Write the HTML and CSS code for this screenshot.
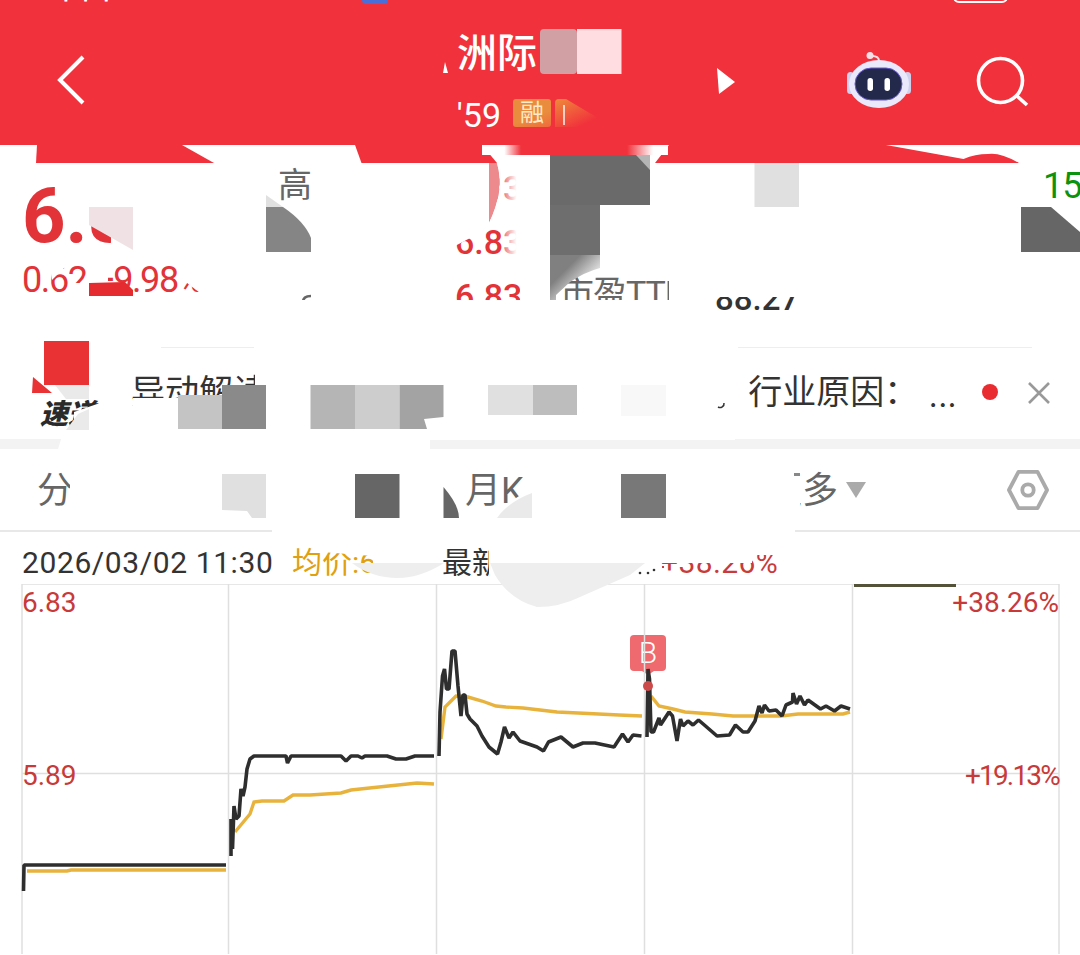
FILE: index.html
```html
<!DOCTYPE html>
<html lang="zh">
<head>
<meta charset="utf-8">
<title>行情</title>
<link rel="stylesheet" href="styles.css">
</head>
<body>
<div class="screen">
  <header class="head">
    <div class="status"><span class="status-l">中国 17:27 15 HKD 5</span><i class="status-app"></i><span class="status-r">46 46 WiFi</span><i class="status-bat"></i></div>
    <div class="nav">
      <svg class="back" viewBox="0 0 30 50" width="30" height="50"><path d="M27 2 4 25l23 23" fill="none" stroke="#fff" stroke-width="4"/></svg>
      <div class="name">
        <div class="title">亚洲际</div>
        <div class="sub"><span class="code">'59</span><span class="badge">融</span></div>
      </div>
      <svg class="play" viewBox="0 0 18 26" width="18" height="26"><path d="M0 0 18 14 2 26Z" fill="#fff"/></svg>
      <svg class="robot" viewBox="0 0 64 56" width="64" height="56">
        <circle cx="23" cy="3.500" r="3.500" fill="#f3dfe6"/><path d="M25 4c4 0 7 1 7 5" fill="none" stroke="#f3dfe6" stroke-width="2"/>
        <rect x="0" y="20" width="7" height="22" rx="3.500" fill="#cfd0ee"/><rect x="57" y="20" width="7" height="22" rx="3.500" fill="#cfd0ee"/>
        <ellipse cx="32" cy="32" rx="30" ry="24" fill="#e9e9fb"/>
        <rect x="8" y="16" width="47" height="32" rx="16" fill="#22294a" stroke="#6a5acd" stroke-width="1"/>
        <rect x="20.500" y="26" width="5.500" height="13" rx="2.700" fill="#fff"/><rect x="37.500" y="26" width="5.500" height="13" rx="2.700" fill="#fff"/>
      </svg>
      <svg class="search" viewBox="0 0 54 54" width="54" height="54"><circle cx="24.500" cy="25.500" r="22" fill="none" stroke="#fff" stroke-width="3.600"/><path d="M41 41l10 9" stroke="#fff" stroke-width="3.600"/></svg>
    </div>
  </header>

  <section class="quote">
    <div class="price">
      <div class="big">6.83</div>
      <div class="change">0.62 +9.98%</div>
    </div>
    <div class="stats">
      <span class="lab">高</span><span class="val">6.83</span><span class="lab">换手</span><span class="dark">&nbsp;</span>
      <span class="lab">开</span><span class="val">6.83</span><span class="lab">量比</span><span class="dark">&nbsp;</span>
      <span class="lab">低</span><span class="val">6.83</span><span class="lab lab-pe">市盈TTM</span><span class="dark dark-pe">88.27</span>
    </div>
    <span class="green">15</span>
  </section>

  <section class="tip">
    <div class="logo"><span class="logo-sq"></span><span class="logo-tx">速递</span></div>
    <div class="tip-text"><span>异动解读</span><span class="tip-r">行业原因：<span class="ell">…</span></span></div>
    <span class="dot"></span>
    <svg class="close" viewBox="0 0 24 24" width="24" height="24"><path d="M2 2l20 20M22 2 2 22" stroke="#999" stroke-width="2.600"/></svg>
  </section>

  <div class="gap"></div>

  <nav class="tabs">
    <span class="tab">分时</span><span class="tab">五日</span><span class="tab">日K</span><span class="tab">周K</span><span class="tab">月K</span><span class="tab">季K</span><span class="tab tab-s">年K</span><span class="tab tab-more">更多<i class="caret"></i></span>
    <svg class="gear" viewBox="0 0 44 42" width="42" height="40"><path d="M12 2h20l10 19-10 19H12L2 21Z" fill="none" stroke="#aaa" stroke-width="4" stroke-linejoin="round"/><circle cx="22" cy="21" r="6" fill="none" stroke="#aaa" stroke-width="4"/></svg>
  </nav>

  <div class="info">
    <span class="date">2026/03/02 11:30</span><span class="avg">均价:6.58</span><span class="last">最新:6.83</span><span class="pct">+38.26%</span>
  </div>

  <section class="chart">
    <span class="flag">B</span>
    <svg class="plot" viewBox="0 0 1080 370" width="1080" height="370">
      <g transform="translate(0 -585)">
        <path class="grid" d="M22 585H1059M22 774.500H1059M22 585V955M228.500 585V955M436.500 585V955M644.500 585V955M852.500 585V955M1059 585V955"/>
        <path class="flat" d="M854 586H956"/>
        <path class="gold" d="M27 872H67L71 871H226"/>
        <path class="gold" d="M235 833 250 815 254 803 262 802H284L293 796H310L341 794 351 791 379 788 417 784 434 785"/>
        <path class="gold" d="M441 740 445 708 456 697 468 698 482 702 496 707 506 708 523 709 540 711 557 713 578 714 619 716 642 717"/>
        <path class="gold" d="M651 697 659 707 673 710 685 713 712 715 733 717H781L798 715H843L850 713"/>
        <path class="line" d="M23.500 892 24 866H226"/>
        <path class="line" d="M231 857V820L232.500 850 234 807 236 820 239 817 241 790 243 797 245 788 247 770 250 760 254 757H286L287.500 764 291 757H341L346 762 351 757H358L362 759 365 757H387L396 760H406L415 757H434"/>
        <path class="line" d="M439 757 440 713 442.500 677 444.500 670 446.500 690H449L452 652H455L458 687 461 717 463 696H465L467 715 470 720 477 727 482 737 489 748 497.500 755 501 743 504.500 728 509 739 513 733 520 742 537 748 543.500 752 548.500 743 561 738 573 748 583 744H595L614 748 622.500 735 628 743 633 736 641.500 737"/>
        <path class="line" d="M647 738 648 670 649.500 680 651 733H653.500L659 719 660.500 726 669 713 672.500 717 677 742 680.500 720 683 727 688 722 693 726 698.500 721 705.500 727 717 737 729.500 736 735.500 726 743 733H748L755 722 759 707 762 714 764.500 706 769 712 776 711 782 717 786 706 792.500 703 793 694 796.500 705 800 697 804.500 706 808 701 820.500 710 826 707 834.500 712 841 707 850 710"/>
        <circle cx="648" cy="687" r="5" fill="#cc4a4a"/>
      </g>
    </svg>
    <span class="tick tick-tl">6.83</span>
    <span class="tick tick-tr">+38.26%</span>
    <span class="tick tick-ml">5.89</span>
    <span class="tick tick-mr">+19.13%</span>
    <span class="tick tick-bl">4.95</span>
    <span class="tick tick-br">0.00%</span>
  </section>

  <svg class="mask" viewBox="0 0 1080 955" width="1080" height="955">
    <defs>
      <linearGradient id="band" x1="0" x2="1" y1="0" y2="0"><stop offset=".12" stop-color="#fff"/><stop offset=".21" stop-color="#f1323c"/><stop offset=".78" stop-color="#f1323c"/><stop offset=".92" stop-color="#fff"/></linearGradient>
      <linearGradient id="fadeGrey" x1="0" x2="1" y1="0" y2="1"><stop offset=".3" stop-color="#808080"/><stop offset=".75" stop-color="#fff"/></linearGradient>
      <linearGradient id="fadeBadge" x1="0" x2="1" y1="0" y2="1"><stop offset="0" stop-color="#ee8a3a"/><stop offset=".7" stop-color="#f1323c"/></linearGradient>
      <linearGradient id="fadeWhite" x1="0" x2="1" y1="0" y2="0"><stop offset="0" stop-color="#fff" stop-opacity=".35"/><stop offset=".7" stop-color="#fff"/></linearGradient>
    </defs>
    <!-- red torn edge under the header -->
    <path fill="#f1323c" d="M37 145 36 163H214L182 145Z"/>
    <path fill="#f1323c" d="M355 145 361.500 163H497L482 145Z"/>
    <path fill="#f1323c" d="M669 145 655 163H1019Q1000 152 988 154 975 154 963.500 159 925 152 886 145Z"/>
    <rect x="482" y="145" width="186" height="10" fill="url(#band)"/>
    <path fill="#ec8a8e" d="M489 163H497Q505 190 489 223Z"/>
    <!-- title pixel blocks -->
    <rect x="540" y="29" width="37" height="45" rx="4" fill="#d0a0a5"/>
    <rect x="577" y="29" width="44.500" height="45" fill="#ffdde1"/>
    <path d="M410 25h47v55h-47z" fill="#f1323c"/>
    <path fill="#fff" d="M445 62 448 73H443Z"/>
    <path fill="url(#fadeBadge)" d="M555 103Q555 99 559 99H566L613 127H555Z"/>
    <path fill="#fff" opacity=".7" d="M563 105h2v20h-2z"/>
    <!-- quote blocks -->
    <path fill="#fff" d="M76 180H250V262H111V215H76Z"/>
    <path fill="#f0e2e4" d="M89 207H133V250L89 225Z"/>
    <path fill="#fff" d="M50 262H70L52 280Z"/>
    <path fill="#fff" d="M68 283H89V298H68Z"/>
    <rect x="88" y="262" width="20" height="21" fill="#fff"/>
    <path fill="#fff" d="M178 262H220V296H204L178 276Z"/>
    <path fill="#e52b2f" d="M89 283 125 282 133 290V296H89Z"/>
    <rect x="266" y="204" width="154" height="96" fill="#fff"/>
    <path fill="#e0e0e0" d="M266 195 283 207H266Z"/>
    <path fill="#858585" d="M266 207H283Q305 222 311 238V252H266Z"/>
    <path fill="none" stroke="#666" stroke-width="2.500" d="M311 296q-8 0-8 6v8"/>
    <rect x="425" y="163" width="64" height="60" fill="#fff"/>
    <path fill="#fff" d="M497 163H504V223H489Q505 190 497 163Z"/>
    <rect x="504" y="170" width="18" height="30" fill="url(#fadeWhite)"/>
    <rect x="504" y="228" width="18" height="30" fill="url(#fadeWhite)"/>
    <path fill="#fff" d="M450 226H474V236L455 246Z"/>
    <path fill="#fff" d="M520 170H550V300H520Z"/>
    <rect x="600" y="205" width="110" height="72" fill="#fff"/>
    <rect x="650" y="163" width="100" height="42" fill="#fff"/>
    <rect x="550" y="155" width="100" height="50" fill="#6a6a6a"/>
    <path fill="#fff" opacity=".5" d="M636 155H650V170Z"/>
    <rect x="550" y="205" width="50" height="50" fill="#6e6e6e"/>
    <path fill="url(#fadeGrey)" d="M550 255H600V268Q585 272 570 282L556 295V305H550Z"/>
    <rect x="754.500" y="163" width="44.500" height="44" fill="#e0e0e0"/>
    <path fill="#666" d="M1021 207H1051L1080 232V252H1021Z"/>
    <!-- white smear over the lower rows -->
    <rect x="0" y="300" width="700" height="40" fill="#fff"/>
    <rect x="669" y="275" width="40" height="30" fill="#fff"/>
    <rect x="700" y="275" width="110" height="22" fill="#fff"/>
    <!-- tip row -->
    <rect x="255" y="340" width="480" height="100" fill="#fff"/>
    <rect x="133" y="398" width="125" height="40" fill="#fff"/>
    <rect x="161" y="347" width="93" height="1" fill="#eee"/>
    <rect x="738" y="347" width="294" height="1" fill="#eee"/>
    <path fill="#eaeaea" d="M55 385H89V399H66Z"/>
    <path fill="#fff" d="M74 412 100 403V430H74Z"/>
    <path fill="#eaeaea" d="M66 430 78 414 89 409V430Z"/>
    <path fill="#e93234" d="M33 377 52 393H32Z"/>
    <rect x="178" y="395" width="44" height="34" fill="#c4c4c4"/>
    <rect x="222" y="385" width="44" height="44" fill="#8a8a8a"/>
    <rect x="310.500" y="385" width="44.500" height="44" fill="#b5b5b5"/>
    <rect x="355" y="385" width="44.500" height="44" fill="#cdcdcd"/>
    <path fill="#a3a3a3" d="M399.500 385H443.500V417L424 419 427 429H399.500Z"/>
    <rect x="488" y="385" width="45" height="30" fill="#e0e0e0"/>
    <rect x="533" y="385" width="44" height="30" fill="#bdbdbd"/>
    <rect x="621" y="385" width="45" height="31" fill="#f8f8f8"/>
    <path fill="none" stroke="#333" stroke-width="1.500" d="M724 403a4 4 0 0 1-6 4"/>
    <!-- divider hole + tabs -->
    <path fill="#fff" d="M64 430H430V449H58Z"/>
    <rect x="70" y="455" width="152" height="70" fill="#fff"/>
    <path fill="#e0e0e0" d="M222 474H266V518H252L247 511 222 510Z"/>
    <rect x="266" y="455" width="190" height="70" fill="#fff"/>
    <rect x="355" y="474" width="44.500" height="44" fill="#666"/>
    <path fill="#666" d="M443.500 487Q459 505 459 518H443.500Z"/>
    <rect x="532" y="455" width="268" height="70" fill="#fff"/>
    <path fill="#fff" d="M497 518 500 508 532 488V518Z"/>
    <path fill="#eaeaea" d="M497 518Q508 502 532 493V518Z"/>
    <rect x="621" y="474" width="45" height="44" fill="#787878"/>
    <path fill="#888" d="M794 473h6v3h-6z"/>
    <rect x="272" y="525" width="523" height="12" fill="#fff"/>
    <!-- info row smear -->
    <path fill="#fff" d="M322 540H373V556L322 552Z"/>
    <path fill="#fff" d="M373 535H442V563H373Z"/>
    <path fill="#eee" d="M352 563H444Q420 578 398 578 372 578 352 563Z"/>
    <path fill="#fff" d="M489 535H778V555H752V563H489Z"/>
    <path fill="#fff" d="M489 563H660V584H489Z"/>
    <path fill="#eee" d="M490 563H645L630 575 580 597Q560 607 537 607 510 600 495 575Z"/>
    <circle cx="640" cy="573" r="1.300" fill="#333"/><circle cx="648" cy="573" r="1.300" fill="#333"/><circle cx="654" cy="570" r="1.300" fill="#333"/>
    <path stroke="#c93a3a" stroke-width="2" d="M662 567h2"/>
  </svg>
</div>
</body>
</html>
```
FILE: styles.css
```css
* { box-sizing: border-box; }
html, body { margin: 0; padding: 0; background: #fff; }
body { font-family: Roboto, "Noto Sans CJK SC", sans-serif; overflow: hidden; }
.screen { position: relative; width: 1080px; height: 955px; overflow: hidden; background: #fff; }

.head { height: 145px; background: #f1323c; color: #fff; overflow: hidden; }
.status { height: 28px; margin-top: -24px; padding: 0 72px 0 52px; display: flex; font-size: 28px; line-height: 28px; font-weight: 500; white-space: nowrap; }
.status-l { width: 298px; letter-spacing: 2px; overflow: hidden; }
.status-app { width: 26px; height: 28px; margin-left: 12px; background: #4a6fd8; border-radius: 4px; }
.status-r { margin-left: auto; letter-spacing: 2px; margin-right: 16px; }
.status-bat { width: 55px; height: 27px; border: 2px solid #fff; border-radius: 6px; }
.nav { display: flex; align-items: flex-start; height: 141px; padding: 0 0 0 56px; }
.back { margin-top: 51px; flex: none; }
.name { flex: none; width: 190px; margin-left: 353px; }
.title { font-size: 40px; line-height: 50px; margin-top: 25px; margin-left: -22px; white-space: nowrap; font-weight: 500; }
.sub { display: flex; align-items: center; margin-top: 20px; height: 28px; }
.code { font-size: 34px; line-height: 28px; width: 62px; text-align: right; padding-top: 3px; }
.badge { width: 38px; height: 28px; margin-left: 12px; background: linear-gradient(160deg, #e98c3e 60%, #ef6a3c); border-radius: 3px; font-size: 24px; line-height: 28px; text-align: center; color: #ffe9c8; }
.play { flex: none; margin: 64px 0 0 88px; }
.robot { flex: none; margin: 48px 0 0 112px; }
.search { flex: none; margin: 51px 0 0 65px; }

.quote { height: 194px; padding: 23px 0 0 22px; display: flex; position: relative; }
.price { width: 256px; flex: none; color: #e23339; }
.big { font-size: 76px; line-height: 70px; font-weight: 700; margin-top: 13px; }
.change { font-size: 36px; line-height: 36px; margin-top: 11px; white-space: nowrap; letter-spacing: -1.4px; }
.stats { display: grid; grid-template-columns: 177px 105px 155px 100px; grid-auto-rows: 54px; font-size: 34px; line-height: 40px; }
.lab { color: #666; margin-top: -3px; }
.val { color: #e23339; font-weight: 500; }
.dark { color: #333; }
.lab-pe { white-space: nowrap; letter-spacing: -1px; }
.dark-pe { font-size: 33px; font-weight: 500; position: relative; top: 3px; }
.green { color: #0a930f; font-size: 36px; line-height: 42px; letter-spacing: -1px; position: absolute; left: 1043px; top: 20px; }

.tip { height: 100px; display: flex; align-items: center; padding: 0 29px 0 32px; }
.logo { width: 99px; flex: none; align-self: stretch; }
.logo-sq { display: block; width: 45px; height: 44px; background: #e93234; margin: 2px 0 0 12px; }
.logo-tx { display: block; font-size: 28px; line-height: 30px; font-weight: 900; font-style: italic; color: #2a2a2a; margin: 12px 0 0 8px; font-family: "Noto Sans CJK SC", sans-serif; white-space: nowrap; }
.tip-text { flex: 1; display: flex; justify-content: space-between; font-size: 34px; line-height: 40px; color: #333; margin-top: 5px; white-space: nowrap; }
.tip-r { margin-right: 24px; }
.ell { font-size: 48px; line-height: 0; font-weight: 300; margin-left: 9px; vertical-align: -3px; }
.dot { width: 16px; height: 16px; border-radius: 50%; background: #e92c2f; flex: none; margin-top: 6px; }
.close { flex: none; margin: 8px 0 0 29px; }

.gap { height: 10px; background: #f3f3f3; }

.tabs { height: 83px; display: flex; align-items: center; padding: 0 31px 0 37px; border-bottom: 2px solid #e8e8e8; font-size: 36px; color: #666; }
.tab { width: 107px; flex: none; white-space: nowrap; margin-top: -6px; }
.tab-s { width: 87px; }
.tab-more { width: auto; display: flex; align-items: center; }
.caret { width: 0; height: 0; margin: 6px 0 0 8px; border-left: 10px solid transparent; border-right: 10px solid transparent; border-top: 16px solid #aaa; }
.gear { margin-left: auto; flex: none; }

.info { height: 52px; padding: 13px 0 0 22px; display: flex; font-size: 30px; line-height: 36px; white-space: nowrap; }
.date { color: #333; width: 270px; letter-spacing: .6px; }
.avg { color: #e0a010; width: 150px; }
.last { color: #333; width: 219px; }
.pct { color: #c93a3a; letter-spacing: .4px; }

.chart { position: relative; height: 370px; }
.plot { display: block; position: relative; }
.grid { fill: none; stroke: #dfdfdf; stroke-width: 1.5; }
.line { fill: none; stroke: #2e2e2e; stroke-width: 3.6; stroke-linejoin: bevel; }
.gold { fill: none; stroke: #e8b33d; stroke-width: 3.4; }
.flat { fill: none; stroke: #55523a; stroke-width: 4; }
.tick { position: absolute; font-size: 28px; line-height: 32px; color: #c83a3a; }
.tick-tl { left: 22px; top: 3px; }
.tick-tr { right: 21px; top: 3px; }
.tick-ml { left: 22px; top: 176px; }
.tick-mr { right: 21px; top: 176px; letter-spacing: -1.8px; }
.tick-bl { left: 22px; top: 366px; }
.tick-br { right: 21px; top: 366px; }
.flag { position: absolute; left: 630px; top: 51px; width: 36px; height: 36px; border-radius: 4px; background: #ee6a6e; color: #fff; font-size: 30px; font-weight: 300; line-height: 36px; text-align: center; }
.flag::after { content: ""; position: absolute; left: 12px; top: 36px; border-left: 6px solid transparent; border-right: 6px solid transparent; border-top: 4px solid #ee6a6e; }

.mask { position: absolute; left: 0; top: 0; pointer-events: none; }
```
